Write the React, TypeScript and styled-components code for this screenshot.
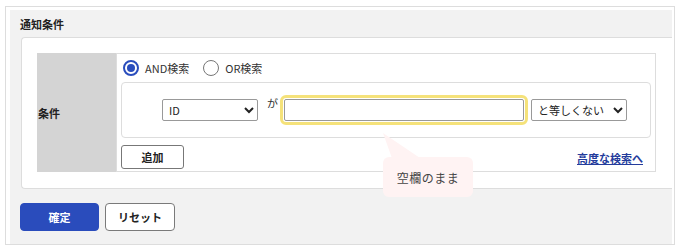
import styled, { createGlobalStyle } from "styled-components";

const GlobalStyle = createGlobalStyle`
  body {
    margin: 0;
    background: #ffffff;
    font-family: "Noto Sans CJK JP", "Noto Sans", sans-serif;
    font-size: 11px;
    color: #333333;
  }
`;

const Frame = styled.div`
  box-sizing: border-box;
  width: 670px;
  height: 239px;
  margin: 6px 0 0 5px;
  padding: 3px 2px 0 4px;
  border: 1px solid #dddddd;
`;

const Panel = styled.section`
  position: relative;
  height: 234px;
  background: #f2f2f2;
`;

const PanelHeader = styled.h2`
  margin: 0;
  height: 27px;
  padding-left: 10px;
  display: flex;
  align-items: center;
  font-size: 11px;
  font-weight: 700;
  color: #222222;
`;

const Card = styled.div`
  margin-left: 11px;
  padding: 15px 16px 16px 15px;
  background: #ffffff;
  border: 1px solid #dddddd;
  border-right: none;
  border-radius: 4px 0 0 4px;
`;

const ConditionTable = styled.div`
  display: grid;
  grid-template-columns: 79px 1fr;
  height: 119px;
`;

const LabelCell = styled.div`
  display: flex;
  align-items: center;
  padding-left: 1px;
  background: #d4d4d4;
  font-weight: 700;
  color: #222222;
`;

const ValueCell = styled.div`
  display: flex;
  flex-direction: column;
  padding: 0 4px 2px 4px;
  border: 1px solid #dddddd;
`;

const RadioRow = styled.div`
  display: flex;
  align-items: center;
  height: 28px;
  padding-left: 2px;
  gap: 14px;
`;

const RadioLabel = styled.label`
  display: flex;
  align-items: center;
  gap: 6px;
  color: #333333;
`;

const RadioMark = styled.span<{ $checked?: boolean }>`
  box-sizing: border-box;
  width: 16px;
  height: 16px;
  border-radius: 50%;
  border: ${({ $checked }) => ($checked ? "2px solid #2a4dbd" : "1.5px solid #767676")};
  display: flex;
  align-items: center;
  justify-content: center;
  background: #ffffff;

  &::after {
    content: "";
    width: 8px;
    height: 8px;
    border-radius: 50%;
    background: ${({ $checked }) => ($checked ? "#2a4dbd" : "transparent")};
  }
`;

const ConditionBox = styled.div`
  box-sizing: border-box;
  height: 56px;
  display: flex;
  align-items: center;
  padding-left: 40px;
  border: 1px solid #dddddd;
  border-radius: 4px;
`;

const Select = styled.select<{ $width: number }>`
  box-sizing: border-box;
  width: ${({ $width }) => $width}px;
  height: 22px;
  padding: 0 2px;
  border: 1px solid #999999;
  border-radius: 2px;
  background: #ffffff;
  font-family: inherit;
  font-size: 11px;
  color: #222222;
`;

const Particle = styled.span`
  margin: 0 6px 0 9px;
  color: #333333;
  line-height: 1;
  align-self: flex-start;
  padding-top: 15px;
`;

const TextInput = styled.input`
  box-sizing: border-box;
  width: 240px;
  height: 22px;
  margin-right: 7px;
  border: 1px solid #999999;
  border-radius: 2px;
  outline: 3px solid #f5e27a;
  outline-offset: 1px;
`;

const FooterRow = styled.div`
  display: flex;
  align-items: center;
  justify-content: space-between;
  margin-top: 7px;
  padding-right: 8px;
`;

const SmallButton = styled.button`
  box-sizing: border-box;
  width: 63px;
  height: 24px;
  border: 1px solid #777777;
  border-radius: 3px;
  background: #ffffff;
  font-family: inherit;
  font-size: 11px;
  font-weight: 700;
  color: #222222;
`;

const AdvancedLink = styled.a`
  margin-top: 2px;
  color: #243c9c;
  font-weight: 700;
  text-decoration: underline;
`;

const Actions = styled.div`
  display: flex;
  gap: 6px;
  margin-top: 14px;
  padding-left: 10px;
`;

const ActionButton = styled.button<{ $primary?: boolean; $width: number }>`
  box-sizing: border-box;
  width: ${({ $width }) => $width}px;
  height: 28px;
  border-radius: 4px;
  border: 1px solid ${({ $primary }) => ($primary ? "#2a4cbc" : "#7a7a7a")};
  background: ${({ $primary }) => ($primary ? "#2a4cbc" : "#ffffff")};
  color: ${({ $primary }) => ($primary ? "#ffffff" : "#222222")};
  font-family: inherit;
  font-size: 11px;
  font-weight: 700;
`;

const Tooltip = styled.div`
  position: absolute;
  left: 373px;
  top: 147px;
  width: 90px;
  height: 40px;
  display: flex;
  align-items: center;
  justify-content: center;
  border-radius: 6px;
  background: #fff3f3;
  font-size: 12px;
  letter-spacing: 0.5px;
  color: #444444;

  &::before {
    content: "";
    position: absolute;
    left: 0;
    top: -24px;
    width: 37px;
    height: 25px;
    background: #fff3f3;
    clip-path: polygon(0 0, 100% 100%, 24% 100%);
  }
`;

export default function App() {
  return (
    <>
      <GlobalStyle />
      <Frame>
        <Panel>
          <PanelHeader>通知条件</PanelHeader>
          <Card>
            <ConditionTable>
              <LabelCell>条件</LabelCell>
              <ValueCell>
                <RadioRow>
                  <RadioLabel>
                    <RadioMark $checked />
                    AND検索
                  </RadioLabel>
                  <RadioLabel>
                    <RadioMark />
                    OR検索
                  </RadioLabel>
                </RadioRow>
                <ConditionBox>
                  <Select $width={96} defaultValue="ID">
                    <option value="ID">ID</option>
                  </Select>
                  <Particle>が</Particle>
                  <TextInput type="text" />
                  <Select $width={96} defaultValue="ne">
                    <option value="ne">と等しくない</option>
                  </Select>
                </ConditionBox>
                <FooterRow>
                  <SmallButton type="button">追加</SmallButton>
                  <AdvancedLink href="#">高度な検索へ</AdvancedLink>
                </FooterRow>
              </ValueCell>
            </ConditionTable>
          </Card>
          <Actions>
            <ActionButton type="button" $primary $width={79}>
              確定
            </ActionButton>
            <ActionButton type="button" $width={70}>
              リセット
            </ActionButton>
          </Actions>
          <Tooltip>空欄のまま</Tooltip>
        </Panel>
      </Frame>
    </>
  );
}
